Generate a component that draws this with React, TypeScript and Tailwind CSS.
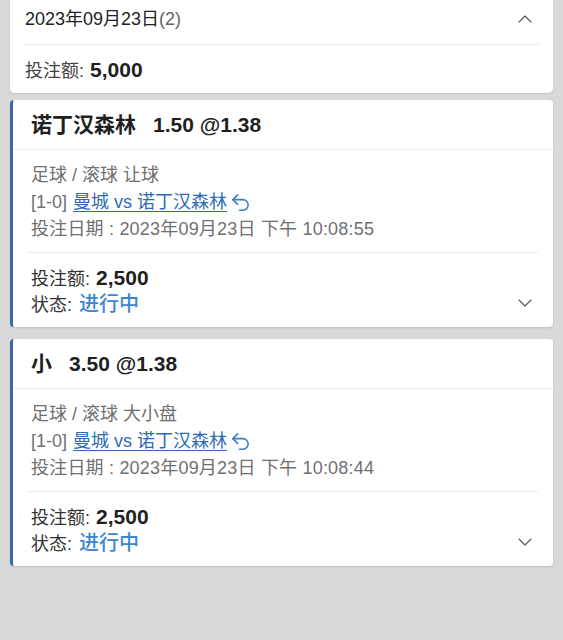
import { ChevronDown, ChevronUp, Undo2 } from "lucide-react";

const font = { fontFamily: '"Liberation Sans", "Noto Sans CJK SC", sans-serif' };

type Bet = {
  pick: string;
  line: string;
  odds: string;
  market: string;
  score: string;
  match: string;
  placed: string;
  stake: string;
  status: string;
};

const bets: Bet[] = [
  {
    pick: "诺丁汉森林",
    line: "1.50",
    odds: "@1.38",
    market: "足球 / 滚球 让球",
    score: "[1-0]",
    match: "曼城 vs 诺丁汉森林",
    placed: "投注日期 : 2023年09月23日 下午 10:08:55",
    stake: "2,500",
    status: "进行中",
  },
  {
    pick: "小",
    line: "3.50",
    odds: "@1.38",
    market: "足球 / 滚球 大小盘",
    score: "[1-0]",
    match: "曼城 vs 诺丁汉森林",
    placed: "投注日期 : 2023年09月23日 下午 10:08:44",
    stake: "2,500",
    status: "进行中",
  },
];

function BetCard({ bet, className }: { bet: Bet; className?: string }) {
  return (
    <div
      className={`mx-[10px] overflow-hidden rounded-[4px] border-l-[3px] border-[#3a6aa3] bg-white shadow-[0_1px_2px_rgba(0,0,0,0.12)] ${className ?? ""}`}
    >
      <div className="flex h-[50px] items-center border-b border-[#ececec] pl-[18px] text-[21px] font-bold text-[#1f1f1f]">
        <span>{bet.pick}</span>
        <span className="ml-[17px]">
          {bet.line} {bet.odds}
        </span>
      </div>
      <div className="pt-[12px] pb-[9px] pl-[18px] text-[18px] leading-[27px] text-[#707070]">
        <div>{bet.market}</div>
        <div className="flex items-center">
          <span>{bet.score}</span>
          <span className="ml-[6px] text-[#2d6cb3] underline decoration-[1px] underline-offset-[3px]">
            {bet.match}
          </span>
          <Undo2 className="ml-[2px] size-[23px] text-[#3a7cc6]" strokeWidth={1.6} />
        </div>
        <div className="tracking-[0.2px]">{bet.placed}</div>
      </div>
      <div className="mx-[15px] h-px bg-[#ececec]" />
      <div className="flex items-end justify-between pt-[12px] pb-[10px] pl-[18px] pr-[16px]">
        <div>
          <div className="flex h-[26px] items-baseline leading-[26px] text-[#333]">
            <span className="text-[18px]">投注额:</span>
            <span className="ml-[6px] text-[21px] font-bold text-[#1f1f1f]">{bet.stake}</span>
          </div>
          <div className="flex h-[26px] items-baseline leading-[26px] text-[#333]">
            <span className="text-[18px]">状态:</span>
            <span className="ml-[7px] text-[20px] font-medium text-[#3a86d3]">{bet.status}</span>
          </div>
        </div>
        <ChevronDown className="mb-[2px] size-[24px] text-[#555]" strokeWidth={1.1} />
      </div>
    </div>
  );
}

export default function App() {
  return (
    <div className="h-[640px] w-full overflow-hidden bg-[#d9d9d9]" style={font}>
      <div className="mx-[10px] rounded-b-[5px] bg-white shadow-[0_1px_2px_rgba(0,0,0,0.1)]">
        <div className="flex h-[44px] items-center justify-between pb-[6px] pl-[15px] pr-[16px]">
          <span className="text-[18px] text-[#222]">
            2023年09月23日<span className="text-[#666]">(2)</span>
          </span>
          <ChevronUp className="size-[24px] text-[#555]" strokeWidth={1.1} />
        </div>
        <div className="mx-[14px] h-px bg-[#ececec]" />
        <div className="flex h-[48px] items-center pt-[2px]">
          <div className="flex h-[26px] items-baseline pl-[15px] leading-[26px]">
            <span className="text-[18px] text-[#444]">投注额:</span>
            <span className="ml-[6px] text-[21px] font-bold text-[#1f1f1f]">5,000</span>
          </div>
        </div>
      </div>
      <BetCard bet={bets[0]} className="mt-[7px]" />
      <BetCard bet={bets[1]} className="mt-[12px]" />
    </div>
  );
}
